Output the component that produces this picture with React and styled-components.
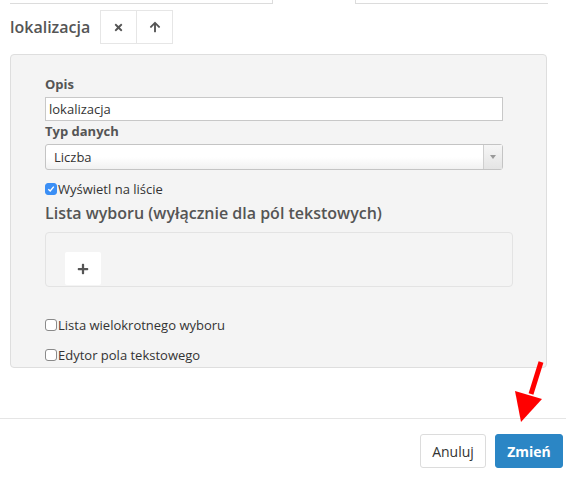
import React from 'react'
import styled, { createGlobalStyle } from 'styled-components'
import { FaTimes, FaArrowUp, FaPlus } from 'react-icons/fa'

const GlobalStyle = createGlobalStyle`
    body {
        margin: 0;
        font-family: "Open Sans", "Liberation Sans", sans-serif;
        background: #fff;
        color: #333;
    }
`

const App = () => {
    return (
        <>
            <GlobalStyle />
            <Page>
                <TabStrip>
                    <TabEdge side="left" />
                    <TabGap />
                    <TabEdge side="right" />
                </TabStrip>

                <Header>
                    <Title>lokalizacja</Title>
                    <ButtonGroup>
                        <IconButton><FaTimes size={11} /></IconButton>
                        <IconButton><FaArrowUp size={12} /></IconButton>
                    </ButtonGroup>
                </Header>

                <Panel>
                    <Label>Opis</Label>
                    <TextInput defaultValue="lokalizacja" />
                    <Label>Typ danych</Label>
                    <Select>
                        <span>Liczba</span>
                        <SelectArrow><Caret /></SelectArrow>
                    </Select>

                    <CheckRow top={10}>
                        <Check checked>
                            <svg width="8" height="8" viewBox="0 0 8 8">
                                <path d="M1.3 4.2 L3.2 6 L6.8 1.6" fill="none" stroke="#fff" strokeWidth="1.4" />
                            </svg>
                        </Check>
                        Wyświetl na liście
                    </CheckRow>

                    <SubHeading>Lista wyboru (wyłącznie dla pól tekstowych)</SubHeading>
                    <ChoiceBox>
                        <AddButton><FaPlus size={12} /></AddButton>
                    </ChoiceBox>

                    <CheckRow top={29}>
                        <Check />
                        Lista wielokrotnego wyboru
                    </CheckRow>
                    <CheckRow top={12}>
                        <Check />
                        Edytor pola tekstowego
                    </CheckRow>
                </Panel>

                <Footer>
                    <Button>Anuluj</Button>
                    <Button primary>Zmień</Button>
                </Footer>

                <Pointer width="40" height="70" viewBox="0 0 40 70">
                    <line x1="31" y1="4" x2="21" y2="36" stroke="#ff0000" strokeWidth="5" />
                    <polygon points="5,33 32,41 11,64" fill="#ff0000" />
                </Pointer>
            </Page>
        </>
    )
}
export default App

const Page = styled.div`
    position: relative;
    width: 566px;
    height: 477px;
    overflow: hidden;
`

const TabStrip = styled.div`
    display: flex;
    height: 4px;
    padding-left: 10px;
`

const TabEdge = styled.div`
    width: ${p => (p.side === 'left' ? '262px' : '192px')};
    border-bottom: 1px solid #dcdcdc;
    ${p => (p.side === 'left' ? 'border-right: 1px solid #dcdcdc;' : 'border-left: 1px solid #dcdcdc;')}
`

const TabGap = styled.div`
    width: 82px;
`

const Header = styled.div`
    display: flex;
    align-items: center;
    padding-left: 10px;
    margin-top: 6px;
`

const Title = styled.h3`
    margin: 0 10px 0 0;
    font-size: 16px;
    font-weight: 600;
    color: #555;
`

const ButtonGroup = styled.div`
    display: flex;
`

const IconButton = styled.button`
    display: flex;
    align-items: center;
    justify-content: center;
    width: 37px;
    height: 34px;
    padding: 0;
    background: #fff;
    border: 1px solid #e6e6e6;
    color: #555;
    & + & {
        margin-left: -1px;
    }
`

const Panel = styled.div`
    margin: 10px 19px 0 10px;
    padding: 20px 34px 0;
    height: 292px;
    background: #f4f4f4;
    border: 1px solid #dedede;
    border-radius: 4px;
`

const Label = styled.div`
    font-size: 13px;
    font-weight: 700;
    line-height: 18px;
    color: #555;
    margin-bottom: 4px;
`

const TextInput = styled.input`
    display: block;
    box-sizing: border-box;
    width: 458px;
    height: 24px;
    margin: 0 0 1px;
    padding: 0 3px;
    font-family: "Open Sans", "Liberation Sans", sans-serif;
    font-size: 13px;
    color: #333;
    background: #fff;
    border: 1px solid #c8c8c8;
    outline: none;
`

const Select = styled.div`
    display: flex;
    align-items: center;
    justify-content: space-between;
    box-sizing: border-box;
    width: 458px;
    height: 26px;
    padding-left: 8px;
    font-size: 13px;
    color: #333;
    background: linear-gradient(#fff 50%, #f1f1f1);
    border: 1px solid #c4c4c4;
    border-radius: 3px;
`

const SelectArrow = styled.div`
    display: flex;
    align-items: center;
    justify-content: center;
    width: 18px;
    height: 100%;
    border-left: 1px solid #cfcfcf;
    background: linear-gradient(#f6f6f6, #e4e4e4);
`

const Caret = styled.span`
    width: 0;
    height: 0;
    border-left: 3px solid transparent;
    border-right: 3px solid transparent;
    border-top: 4px solid #999;
`

const CheckRow = styled.label`
    display: flex;
    align-items: center;
    margin-top: ${p => p.top}px;
    font-size: 13px;
    line-height: 18px;
    color: #333;
`

const Check = styled.span`
    display: inline-flex;
    align-items: center;
    justify-content: center;
    box-sizing: border-box;
    width: 12px;
    height: 12px;
    margin-right: 1px;
    border-radius: 3px;
    background: ${p => (p.checked ? '#3b8ff5' : '#fff')};
    border: 1px solid ${p => (p.checked ? '#3b8ff5' : '#8a8a8a')};
`

const SubHeading = styled.h4`
    margin: 5px 0 0;
    font-size: 16px;
    font-weight: 600;
    line-height: 20px;
    color: #555;
`

const ChoiceBox = styled.div`
    box-sizing: border-box;
    width: 468px;
    height: 55px;
    margin-top: 9px;
    padding: 19px 0 0 19px;
    background: #f4f4f4;
    border: 1px solid #e3e3e3;
    border-radius: 4px;
`

const AddButton = styled.button`
    display: flex;
    align-items: center;
    justify-content: center;
    width: 36px;
    height: 33px;
    padding: 0;
    background: #fff;
    border: none;
    border-radius: 2px;
    color: #555;
`

const Footer = styled.div`
    display: flex;
    justify-content: flex-end;
    gap: 9px;
    margin-top: 50px;
    padding: 15px 3px 0 0;
    border-top: 1px solid #e5e5e5;
`

const Button = styled.button`
    height: 34px;
    width: ${p => (p.primary ? '68px' : '66px')};
    padding: 0;
    font-family: "Open Sans", "Liberation Sans", sans-serif;
    font-size: 14px;
    font-weight: ${p => (p.primary ? 700 : 400)};
    color: ${p => (p.primary ? '#fff' : '#333')};
    background: ${p => (p.primary ? '#2b86c5' : '#fff')};
    border: 1px solid ${p => (p.primary ? '#2b86c5' : '#dcdcdc')};
    border-radius: 3px;
`

const Pointer = styled.svg`
    position: absolute;
    left: 510px;
    top: 358px;
`
